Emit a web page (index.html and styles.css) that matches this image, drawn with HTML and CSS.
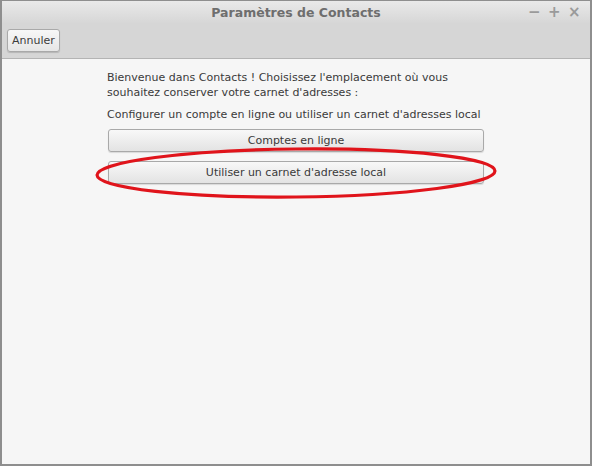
FILE: index.html
```html
<!DOCTYPE html>
<html lang="fr">
<head>
    <meta charset="UTF-8">
    <title>Paramètres de Contacts</title>
    <link rel="stylesheet" href="styles.css">
</head>
<body>

    <div class="window">
        <div class="header">
            <div class="titlebar">
                <span class="title">Paramètres de Contacts</span>
                <div class="controls">
                    <span class="ctl">&#8722;</span>
                    <span class="ctl">+</span>
                    <span class="ctl">&#215;</span>
                </div>
            </div>
            <div class="toolbar">
                <button class="cancel-btn">Annuler</button>
            </div>
        </div>

        <div class="content">
            <div class="panel">
                <p class="intro">Bienvenue dans Contacts ! Choisissez l'emplacement où vous souhaitez conserver votre carnet d'adresses :</p>
                <p class="hint">Configurer un compte en ligne ou utiliser un carnet d'adresses local</p>
                <button class="choice-btn">Comptes en ligne</button>
                <div class="highlight">
                    <button class="choice-btn">Utiliser un carnet d'adresse local</button>
                    <!-- red annotation ring around the local option -->
                    <svg class="ring" width="404" height="56" viewBox="0 0 404 56">
                        <ellipse cx="202" cy="28" rx="199" ry="24" fill="none" stroke="#e0141b" stroke-width="3.2" transform="rotate(-0.6 202 28)"/>
                    </svg>
                </div>
            </div>
        </div>
    </div>

</body>
</html>
```

FILE: styles.css
```css
body {
    margin: 0;
    padding: 0;
    background-color: #8e8e8e;
    font-family: 'DejaVu Sans', sans-serif;
}
.window {
    box-sizing: border-box;
    width: 592px;
    height: 466px;
    border: 2px solid #8e8e8e;
    border-top-width: 1px;
    display: flex;
    flex-direction: column;
    background-color: #f6f6f6;
}
.header {
    height: 57px;
    background: linear-gradient(#e9e9e9, #d6d6d6 40%, #d6d6d6);
    border-bottom: 1px solid #b4b4b4;
}
.titlebar {
    display: flex;
    align-items: center;
    justify-content: center;
    height: 23px;
    position: relative;
}
.title {
    font-size: 12.5px;
    font-weight: bold;
    color: #6e6e6e;
}
.controls {
    position: absolute;
    right: 11px;
    top: 2px;
    display: flex;
    gap: 9px;
}
.ctl {
    font-size: 15px;
    font-weight: bold;
    color: #9a9a9a;
    width: 11px;
    text-align: center;
}
.toolbar {
    padding: 5px 0 0 5px;
}
.cancel-btn {
    height: 23px;
    padding: 0 4px;
    font-family: 'DejaVu Sans', sans-serif;
    font-size: 11px;
    color: #3c3c3c;
    background: linear-gradient(#f7f7f7, #e6e6e6);
    border: 1px solid #a9a9a9;
    border-radius: 3px;
    box-shadow: 0 1px 1px rgba(0, 0, 0, 0.15);
}
.content {
    flex: 1;
    display: flex;
    justify-content: center;
}
.panel {
    width: 378px;
    padding-top: 11px;
}
.intro, .hint {
    margin: 0 0 7px 0;
    font-size: 11px;
    line-height: 15px;
    color: #3a3a3a;
}
.hint {
    margin-bottom: 7px;
}
.choice-btn {
    display: block;
    width: 376px;
    height: 23px;
    margin: 0 0 9px 1px;
    font-family: 'DejaVu Sans', sans-serif;
    font-size: 11px;
    color: #3a3a3a;
    background: linear-gradient(#f8f8f8, #e3e3e3);
    border: 1px solid #a9a9a9;
    border-radius: 3px;
    box-shadow: 0 1px 1px rgba(0, 0, 0, 0.12);
}
.highlight {
    position: relative;
}
.ring {
    position: absolute;
    left: -13px;
    top: -16px;
}
```
